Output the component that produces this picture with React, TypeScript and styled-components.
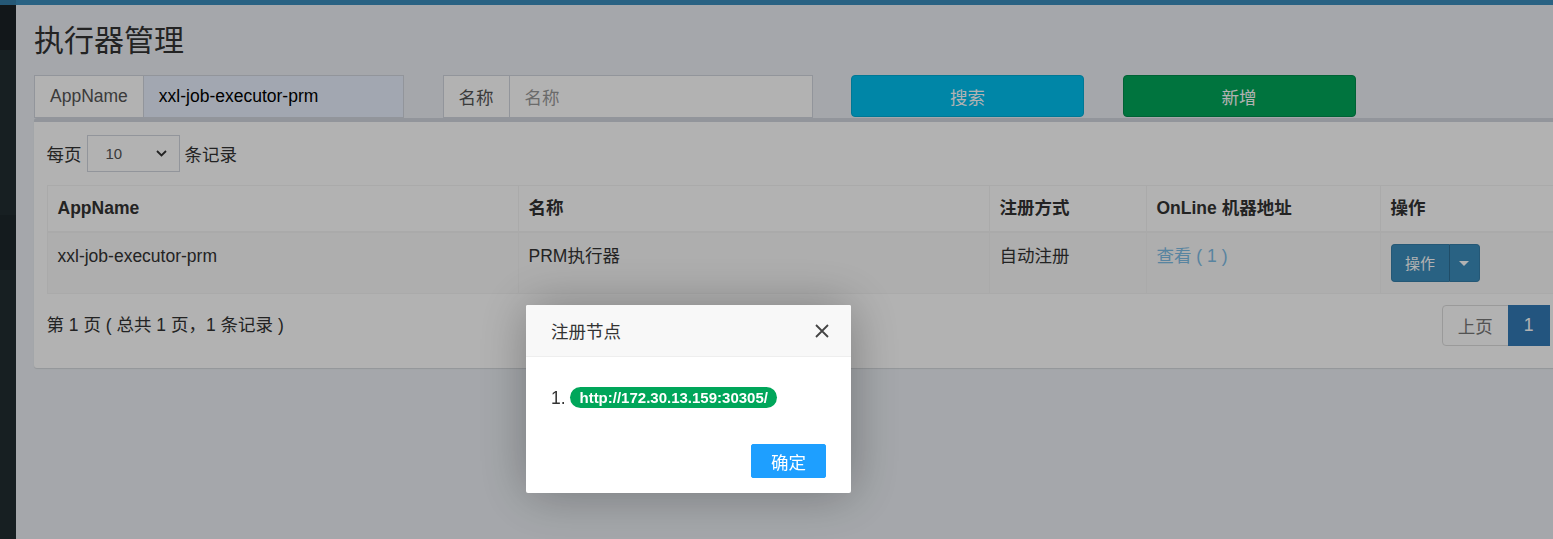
import React from "react";
import styled, { createGlobalStyle } from "styled-components";

const Global = createGlobalStyle`
  html, body { margin: 0; padding: 0; overflow: hidden; }
  body {
    font-family: "Liberation Sans", "Noto Sans CJK SC", sans-serif;
    font-size: 17.5px;
    color: #333;
    background: #ecf0f5;
  }
  * { box-sizing: border-box; }
`;

const Page = styled.div`
  display: flex;
  flex-direction: column;
  height: 100vh;
  width: 1660px;
`;

const TopBar = styled.div`
  display: flex;
  height: 5px;
  flex: none;
`;

const TopLogo = styled.div`
  width: 16px;
  background: #367fa9;
`;

const TopNav = styled.div`
  flex: 1;
  background: #3c8dbc;
`;

const Body = styled.div`
  display: flex;
  flex: 1;
`;

const Sidebar = styled.div`
  width: 16px;
  flex: none;
  display: flex;
  flex-direction: column;
  background: #222d32;
`;

const SideBand = styled.div<{ $h: number; $c: string }>`
  height: ${(p) => p.$h}px;
  background: ${(p) => p.$c};
  flex: none;
`;

const Content = styled.div`
  flex: 1;
  padding: 19px 19px 0 18px;
  background: #ecf0f5;
`;

const Title = styled.h1`
  margin: 0 0 18px;
  font-size: 30px;
  line-height: 33px;
  font-weight: 400;
  color: #333;
`;

const SearchRow = styled.div`
  display: flex;
  gap: 38.5px;
  height: 43px;
`;

const InputGroup = styled.div`
  display: flex;
  width: 370px;
  height: 43px;
`;

const Addon = styled.span`
  display: flex;
  align-items: center;
  padding: 0 15px;
  background: #fff;
  border: 1px solid #d2d6de;
  border-right: 0;
  color: #555;
  white-space: nowrap;
`;

const Field = styled.div<{ $autofill?: boolean; $placeholder?: boolean }>`
  flex: 1;
  display: flex;
  align-items: center;
  padding: 0 15px;
  border: 1px solid #d2d6de;
  background: ${(p) => (p.$autofill ? "#e8f0fe" : "#fff")};
  color: ${(p) => (p.$placeholder ? "#999" : "#000")};
`;

const ActionButton = styled.div<{ $bg: string; $border: string }>`
  width: 233px;
  height: 42px;
  display: flex;
  align-items: center;
  justify-content: center;
  background: ${(p) => p.$bg};
  border: 1px solid ${(p) => p.$border};
  border-radius: 4px;
  color: #fff;
`;

const Box = styled.div`
  width: 1593px;
  background: #fff;
  border-top: 4px solid #d2d6de;
  border-radius: 3px;
  box-shadow: 0 1px 1px rgba(0, 0, 0, 0.1);
  padding: 12.5px 12.5px 20px;
`;

const LengthRow = styled.div`
  display: flex;
  align-items: center;
  gap: 5px;
  height: 37px;
  margin-bottom: 13.5px;
`;

const SelectBox = styled.div`
  width: 93px;
  height: 37px;
  display: flex;
  align-items: center;
  justify-content: space-between;
  padding: 0 12px 0 18px;
  border: 1px solid #d2d6de;
  font-size: 15px;
  color: #555;
`;

const Table = styled.table`
  width: 1568px;
  table-layout: fixed;
  border-collapse: collapse;
  border: 1px solid #f4f4f4;
  margin-bottom: 9px;
`;

const Th = styled.th<{ $w: number }>`
  width: ${(p) => p.$w}px;
  text-align: left;
  font-weight: 700;
  padding: 10px;
  line-height: 25px;
  border: 1px solid #f4f4f4;
  border-bottom-width: 2px;
  color: #333;
`;

const Tr = styled.tr<{ $striped?: boolean }>`
  background: ${(p) => (p.$striped ? "#f9f9f9" : "#fff")};
`;

const Td = styled.td`
  padding: 11px 10px;
  line-height: 25px;
  vertical-align: top;
  border: 1px solid #f4f4f4;
  height: 60px;
`;

const Link = styled.span`
  color: #7fbde6;
`;

const BtnGroup = styled.div`
  display: inline-flex;
  height: 38px;
`;

const GroupBtn = styled.div<{ $caret?: boolean }>`
  display: flex;
  align-items: center;
  justify-content: center;
  width: ${(p) => (p.$caret ? 31 : 58)}px;
  background: #3c8dbc;
  border: 1px solid #367fa9;
  border-radius: ${(p) => (p.$caret ? "0 4px 4px 0" : "4px 0 0 4px")};
  ${(p) => (p.$caret ? "border-left: 1px solid #2e6f96;" : "border-right: 0;")}
  color: #fff;
  font-size: 15px;
`;

const Caret = styled.span`
  width: 0;
  height: 0;
  border-top: 5px solid #fff;
  border-left: 5px solid transparent;
  border-right: 5px solid transparent;
`;

const FooterRow = styled.div`
  display: flex;
  justify-content: space-between;
  align-items: flex-start;
`;

const Info = styled.div`
  padding-top: 10px;
  line-height: 25px;
  color: #333;
`;

const Pagination = styled.div`
  display: flex;
  margin: 2px 65px 2px 0;
`;

const PageItem = styled.div<{ $active?: boolean; $first?: boolean }>`
  height: 41px;
  display: flex;
  align-items: center;
  padding: 0 15px;
  border: 1px solid ${(p) => (p.$active ? "#337ab7" : "#ddd")};
  margin-left: ${(p) => (p.$first ? 0 : -1)}px;
  background: ${(p) => (p.$active ? "#337ab7" : "#fff")};
  color: ${(p) => (p.$active ? "#fff" : "#777")};
  border-radius: ${(p) => (p.$first ? "4px 0 0 4px" : "0")};
`;

const Shade = styled.div`
  position: fixed;
  inset: 0;
  background: rgba(0, 0, 0, 0.3);
  z-index: 10;
`;

const Layer = styled.div`
  position: fixed;
  left: 526px;
  top: 305px;
  width: 325px;
  height: 188px;
  background: #fff;
  border-radius: 2px;
  box-shadow: 1px 1px 50px rgba(0, 0, 0, 0.3);
  z-index: 11;
  display: flex;
  flex-direction: column;
`;

const LayerTitle = styled.div`
  height: 52px;
  display: flex;
  align-items: center;
  justify-content: space-between;
  padding: 0 22px 0 25px;
  background: #f8f8f8;
  border-bottom: 1px solid #eee;
  border-radius: 2px 2px 0 0;
  font-size: 17.5px;
  color: #333;
  flex: none;
`;

const LayerContent = styled.div`
  padding: 26px 25px 0;
  line-height: 30px;
  font-size: 17.5px;
  color: #333;
`;

const Badge = styled.span`
  display: inline-block;
  padding: 3px 9px;
  border-radius: 11px;
  background: #00a65a;
  color: #fff;
  font-size: 15px;
  font-weight: 700;
  line-height: 15px;
  vertical-align: 1px;
`;

const LayerBtns = styled.div`
  display: flex;
  justify-content: flex-end;
  margin-top: auto;
  padding: 0 25px 15px;
`;

const OkButton = styled.div`
  height: 34px;
  display: flex;
  align-items: center;
  padding: 0 19px;
  background: #1e9fff;
  border: 1px solid #1e9fff;
  border-radius: 2px;
  color: #fff;
  font-size: 17.5px;
`;

const Chevron = () => (
  <svg width="11" height="7" viewBox="0 0 11 7">
    <path d="M1 1l4.5 4.5L10 1" fill="none" stroke="#333" strokeWidth="1.8" />
  </svg>
);

const CloseIcon = () => (
  <svg width="14" height="14" viewBox="0 0 14 14">
    <path d="M1 1l12 12M13 1L1 13" stroke="#444" strokeWidth="1.8" />
  </svg>
);

export default function App() {
  return (
    <>
      <Global />
      <Page>
        <TopBar>
          <TopLogo />
          <TopNav />
        </TopBar>
        <Body>
          <Sidebar>
            <SideBand $h={45} $c="#1a2226" />
            <SideBand $h={165} $c="#222d32" />
            <SideBand $h={55} $c="#1e282c" />
            <SideBand $h={269} $c="#222d32" />
          </Sidebar>
          <Content>
            <Title>执行器管理</Title>
            <SearchRow>
              <InputGroup>
                <Addon>AppName</Addon>
                <Field $autofill>xxl-job-executor-prm</Field>
              </InputGroup>
              <InputGroup>
                <Addon>名称</Addon>
                <Field $placeholder>名称</Field>
              </InputGroup>
              <ActionButton $bg="#00c0ef" $border="#00acd6">搜索</ActionButton>
              <ActionButton $bg="#00a65a" $border="#008d4c">新增</ActionButton>
            </SearchRow>
            <Box>
              <LengthRow>
                每页
                <SelectBox>
                  <span>10</span>
                  <Chevron />
                </SelectBox>
                条记录
              </LengthRow>
              <Table>
                <thead>
                  <tr>
                    <Th $w={471}>AppName</Th>
                    <Th $w={471}>名称</Th>
                    <Th $w={157}>注册方式</Th>
                    <Th $w={234}>OnLine 机器地址</Th>
                    <Th $w={235}>操作</Th>
                  </tr>
                </thead>
                <tbody>
                  <Tr $striped>
                    <Td>xxl-job-executor-prm</Td>
                    <Td>PRM执行器</Td>
                    <Td>自动注册</Td>
                    <Td>
                      <Link>查看 ( 1 )</Link>
                    </Td>
                    <Td>
                      <BtnGroup>
                        <GroupBtn>操作</GroupBtn>
                        <GroupBtn $caret>
                          <Caret />
                        </GroupBtn>
                      </BtnGroup>
                    </Td>
                  </Tr>
                </tbody>
              </Table>
              <FooterRow>
                <Info>第 1 页 ( 总共 1 页，1 条记录 )</Info>
                <Pagination>
                  <PageItem $first>上页</PageItem>
                  <PageItem $active>1</PageItem>
                </Pagination>
              </FooterRow>
            </Box>
          </Content>
        </Body>
      </Page>
      <Shade />
      <Layer>
        <LayerTitle>
          注册节点
          <CloseIcon />
        </LayerTitle>
        <LayerContent>
          1. <Badge>http://172.30.13.159:30305/</Badge>
        </LayerContent>
        <LayerBtns>
          <OkButton>确定</OkButton>
        </LayerBtns>
      </Layer>
    </>
  );
}
